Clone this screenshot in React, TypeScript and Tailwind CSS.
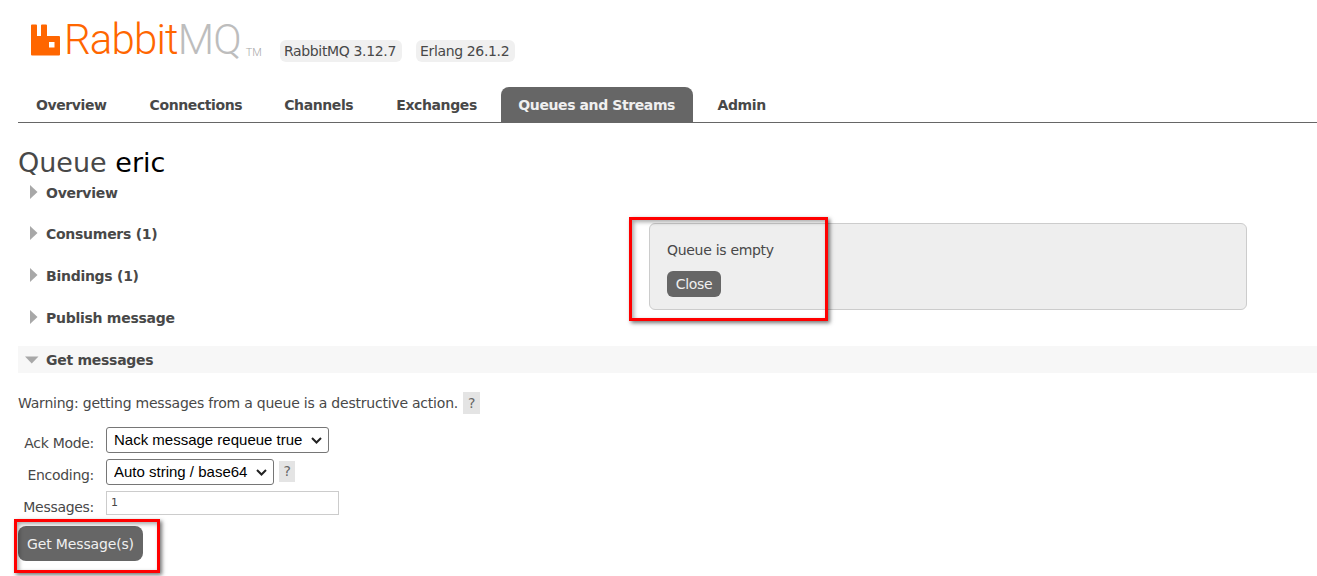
import React from "react";

const V = "font-['Verdana','DejaVu_Sans',sans-serif]";

function Tab({ label, active }: { label: string; active?: boolean }) {
  return (
    <div
      className={
        active
          ? "h-[35px] pt-[2px] rounded-t-lg bg-[#666666] px-[17.5px] flex items-center text-[14px] font-bold tracking-[-0.4px] text-[#f0f0f0]"
          : "h-[35px] pt-[2px] px-[18px] flex items-center text-[14px] font-bold tracking-[-0.4px] text-[#484848]"
      }
    >
      {label}
    </div>
  );
}

function Section({ label, className }: { label: string; className: string }) {
  return (
    <div className={"flex items-center h-[20px] " + className}>
      <svg width="8" height="14" viewBox="0 0 8 14" className="ml-[12px] mr-[8px] -mt-[3px] shrink-0">
        <path d="M0 0L7.5 7L0 14Z" fill="#a8a8a8" />
      </svg>
      <span className="text-[14px] font-bold tracking-[-0.27px] text-[#484848] leading-none">{label}</span>
    </div>
  );
}

function Select({ label, width }: { label: string; width: string }) {
  return (
    <div className={"relative ml-[12px] h-[26px] " + width}>
      <select className="appearance-none w-full h-[26px] rounded-[3px] border border-[#767676] bg-white pl-[7px] font-['Liberation_Sans',sans-serif] text-[15px] tracking-normal text-black">
        <option>{label}</option>
      </select>
      <svg width="11" height="7" viewBox="0 0 11 7" className="absolute right-[7px] top-[10px] pointer-events-none">
        <path d="M1 1L5.5 5.5L10 1" fill="none" stroke="#222222" strokeWidth="2" />
      </svg>
    </div>
  );
}

export default function App() {
  return (
    <div className={"relative w-[1317px] h-[576px] overflow-hidden bg-white " + V}>
      <header className="flex items-start pl-[31px] pt-[17px] h-[87px]">
        <div className="flex items-start w-[249px]">
          <svg width="29" height="32" viewBox="0 0 29 32" className="mt-[7px] shrink-0">
            <path
              fillRule="evenodd"
              d="M0 1.5Q0 0.5 1 0.5H5Q6 0.5 6 1.5V12H10V1.5Q10 0.5 11 0.5H15Q16 0.5 16 1.5V12H28Q29 12 29 13V30.5Q29 31.5 28 31.5H1Q0 31.5 0 30.5ZM18 18V23.5H23.5V18Z"
              fill="#ff6600"
            />
          </svg>
          <span className="font-['Roboto',sans-serif] font-light text-[42px] leading-[48px] tracking-[-0.85px] ml-[4px] mt-[-1px] text-[#ff6600]">
            Rabbit<span className="text-[#bdbdbd]">MQ</span>
          </span>
          <span className="font-['Roboto',sans-serif] font-light text-[11px] text-[#a8a8a8] mt-[28px] ml-[5px]">TM</span>
        </div>
        <div className="flex gap-[14px] mt-[23px] text-[14px] text-[#484848] tracking-[-0.35px]">
          <span className="h-[22px] rounded-md bg-[#f0f0f0] pl-[4px] pr-[6px] flex items-center">RabbitMQ 3.12.7</span>
          <span className="h-[22px] rounded-md bg-[#f0f0f0] pl-[4px] pr-[6px] flex items-center">Erlang 26.1.2</span>
        </div>
      </header>

      <nav className="ml-[18px] h-[36px] flex border-b border-[#666666]">
        <Tab label="Overview" />
        <div className="w-[7px]" />
        <Tab label="Connections" />
        <div className="w-[6px]" />
        <Tab label="Channels" />
        <div className="w-[7px]" />
        <Tab label="Exchanges" />
        <div className="w-[6px]" />
        <Tab label="Queues and Streams" active />
        <div className="w-[7px]" />
        <Tab label="Admin" />
      </nav>

      <main className="pl-[18px]">
        <h1 className="mt-[22px] h-[36px] text-[27px] leading-[36px] text-[#484848]">
          Queue <span className="text-black">eric</span>
        </h1>
        <Section label="Overview" className="mt-[2px]" />
        <Section label="Consumers (1)" className="mt-[21px]" />
        <Section label="Bindings (1)" className="mt-[22px]" />
        <Section label="Publish message" className="mt-[22px]" />
        <div className="mt-[18px] h-[27px] bg-[#f7f7f7] flex items-center">
          <svg width="14" height="8" viewBox="0 0 14 8" className="ml-[7px] mr-[7px] shrink-0">
            <path d="M0 0.5H13.5L6.75 7.5Z" fill="#a8a8a8" />
          </svg>
          <span className="text-[14px] font-bold tracking-[-0.27px] text-[#484848] leading-none">Get messages</span>
        </div>

        <div className="mt-[19px] h-[22px] flex items-center gap-[5px] text-[14px] tracking-[-0.22px] text-[#484848]">
          <span>Warning: getting messages from a queue is a destructive action.</span>
          <span className="inline-flex items-center justify-center w-[17px] h-[22px] bg-[#e4e4e4] text-[#666] text-[14px]">?</span>
        </div>

        <div className="mt-[13px] flex flex-col gap-[6px] text-[14px] tracking-[-0.3px] text-[#484848]">
          <div className="flex items-start h-[26px]">
            <label className="w-[76px] text-right mt-[6px] leading-[20px]">Ack Mode:</label>
            <Select label="Nack message requeue true" width="w-[223px]" />
          </div>
          <div className="flex items-start h-[26px]">
            <label className="w-[76px] text-right mt-[6px] leading-[20px]">Encoding:</label>
            <Select label="Auto string / base64" width="w-[168px]" />
            <span className="ml-[5px] mt-[2px] inline-flex items-center justify-center w-[16px] h-[21px] bg-[#e4e4e4] text-[#666] text-[14px]">?</span>
          </div>
          <div className="flex items-start h-[24px]">
            <label className="w-[76px] text-right mt-[6px] leading-[20px]">Messages:</label>
            <input
              readOnly
              value="1"
              className="ml-[12px] w-[233px] h-[24px] border border-[#cccccc] bg-white px-[4px] pb-[2px] text-[11px] text-[#484848] outline-none"
            />
          </div>
        </div>

        <button className="mt-[11px] h-[35px] w-[125px] pt-[2px] rounded-lg bg-[#666666] text-[14px] tracking-[-0.15px] text-[#f0f0f0]">
          Get Message(s)
        </button>
      </main>

      <div className="absolute left-[649px] top-[223px] w-[598px] h-[87px] rounded-md border border-[#cccccc] bg-[#eeeeee] pl-[17px] pt-[16px] text-[14px] tracking-[-0.3px] text-[#484848]">
        <p className="leading-[20px]">Queue is empty</p>
        <button className="mt-[11px] h-[26px] w-[54px] rounded-md bg-[#666666] text-[14px] text-[#f0f0f0]">Close</button>
      </div>

      <div className="absolute left-[629px] top-[217px] w-[199px] h-[104px] border-[3px] border-[#ff0000] shadow-[2px_2px_4px_rgba(0,0,0,0.55),inset_2px_2px_4px_rgba(0,0,0,0.35)]" />
      <div className="absolute left-[14px] top-[519px] w-[146px] h-[54px] border-[3px] border-[#ff0000] shadow-[2px_2px_4px_rgba(0,0,0,0.55),inset_2px_2px_4px_rgba(0,0,0,0.35)]" />
    </div>
  );
}
